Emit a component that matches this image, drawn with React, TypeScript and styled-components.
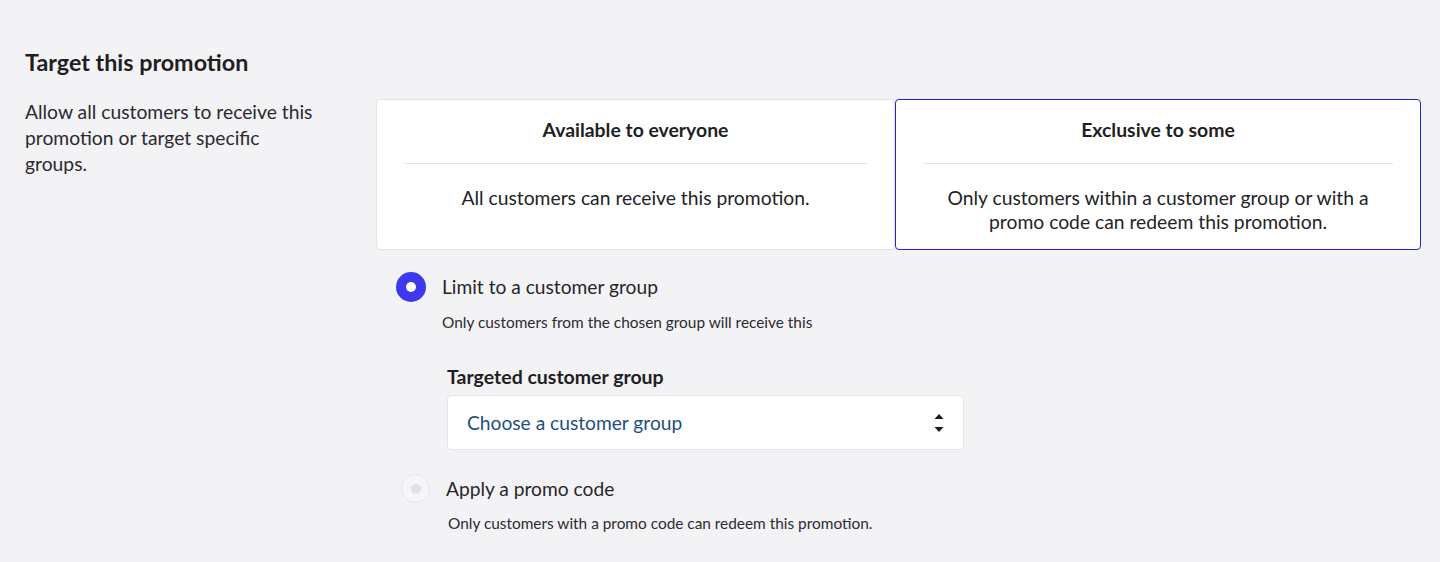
import React, { useState } from "react";
import styled, { createGlobalStyle } from "styled-components";

const GlobalStyle = createGlobalStyle`
  html, body {
    margin: 0;
    padding: 0;
    background: #f3f2f5;
    font-family: Lato, "Open Sans", "Liberation Sans", sans-serif;
    color: #222226;
  }
  * {
    box-sizing: border-box;
  }
`;

const Page = styled.div`
  padding: 49px 19px 20px 25px;
`;

const Heading = styled.h2`
  margin: 0 0 24px;
  font-size: 23.3px;
  line-height: 26px;
  font-weight: 700;
  color: #1f1f23;
`;

const Section = styled.div`
  display: grid;
  grid-template-columns: 351px 1fr;
`;

const Description = styled.p`
  margin: 0;
  max-width: 300px;
  font-size: 19.3px;
  line-height: 26px;
  color: #2a2a2e;
`;

const Options = styled.div`
  display: flex;
  flex-direction: column;
`;

const CardRow = styled.div`
  display: grid;
  grid-template-columns: 519px 1fr;
`;

const Card = styled.div<{ $active?: boolean }>`
  background: #ffffff;
  border: ${({ $active }) => ($active ? "1.5px solid #2222dd" : "1px solid #e3e2e6")};
  border-radius: 4px;
  padding: 17px 27px 15px;
  text-align: center;
  cursor: pointer;
`;

const CardTitle = styled.div`
  font-size: 19.4px;
  line-height: 26px;
  font-weight: 700;
  color: #1f1f23;
`;

const Divider = styled.hr`
  margin: 20px 0 22px;
  border: 0;
  border-top: 1px solid #e3e2e6;
`;

const CardText = styled.div`
  font-size: 19.3px;
  line-height: 24px;
  color: #232327;
`;

const Choice = styled.div<{ $indent: number; $gap: number }>`
  display: flex;
  flex-direction: column;
  padding-left: ${({ $indent }) => $indent}px;
  margin-top: ${({ $gap }) => $gap}px;
`;

const ChoiceRow = styled.label`
  display: flex;
  align-items: center;
  gap: 16px;
  cursor: pointer;
`;

const RadioDot = styled.span<{ $checked: boolean }>`
  flex: none;
  display: flex;
  align-items: center;
  justify-content: center;
  width: ${({ $checked }) => ($checked ? 30 : 29)}px;
  height: ${({ $checked }) => ($checked ? 30 : 29)}px;
  border-radius: 50%;
  background: ${({ $checked }) => ($checked ? "#3d39ef" : "#f6f5f8")};
  border: ${({ $checked }) => ($checked ? "none" : "1.5px solid #e6e5ea")};

  &::after {
    content: "";
    width: 10px;
    height: 10px;
    border-radius: 50%;
    background: ${({ $checked }) => ($checked ? "#ffffff" : "#e1e0e5")};
  }
`;

const ChoiceLabel = styled.span`
  font-size: 19.2px;
  line-height: 26px;
  color: #26262a;
`;

const ChoiceHint = styled.div<{ $offset: number }>`
  margin: 10px 0 0 ${({ $offset }) => $offset}px;
  font-size: 15.4px;
  line-height: 20px;
  color: #2c2c30;
`;

const Field = styled.div`
  display: flex;
  flex-direction: column;
  margin: 33px 0 0 71px;
  width: 517px;
`;

const FieldLabel = styled.div`
  font-size: 19.5px;
  line-height: 24px;
  font-weight: 700;
  color: #1f1f23;
  margin-bottom: 6px;
`;

const Select = styled.div`
  display: flex;
  align-items: center;
  justify-content: space-between;
  height: 55px;
  padding: 0 18px 0 19px;
  background: #ffffff;
  border: 1px solid #e6e5ea;
  border-radius: 4px;
  font-size: 19.2px;
  color: #1d4f7e;
  cursor: pointer;
`;

const Arrows = () => (
  <svg width="12" height="26" viewBox="0 0 12 26" aria-hidden="true">
    <path d="M6 4 L10.5 9 L1.5 9 Z" fill="#1b1b1f" />
    <path d="M1.5 17 L10.5 17 L6 22 Z" fill="#1b1b1f" />
  </svg>
);

export default function App() {
  const [exclusive, setExclusive] = useState(true);
  const [mode, setMode] = useState<"group" | "code">("group");

  return (
    <Page>
      <GlobalStyle />
      <Heading>Target this promotion</Heading>
      <Section>
        <Description>
          Allow all customers to receive this promotion or target specific groups.
        </Description>
        <Options>
          <CardRow>
            <Card $active={!exclusive} onClick={() => setExclusive(false)}>
              <CardTitle>Available to everyone</CardTitle>
              <Divider />
              <CardText>All customers can receive this promotion.</CardText>
            </Card>
            <Card $active={exclusive} onClick={() => setExclusive(true)}>
              <CardTitle>Exclusive to some</CardTitle>
              <Divider />
              <CardText>
                Only customers within a customer group or with a
                <br />
                promo code can redeem this promotion.
              </CardText>
            </Card>
          </CardRow>

          <Choice $indent={20} $gap={22}>
            <ChoiceRow onClick={() => setMode("group")}>
              <RadioDot $checked={mode === "group"} />
              <ChoiceLabel>Limit to a customer group</ChoiceLabel>
            </ChoiceRow>
            <ChoiceHint $offset={46}>
              Only customers from the chosen group will receive this
            </ChoiceHint>
          </Choice>

          <Field>
            <FieldLabel>Targeted customer group</FieldLabel>
            <Select>
              <span>Choose a customer group</span>
              <Arrows />
            </Select>
          </Field>

          <Choice $indent={25} $gap={24}>
            <ChoiceRow onClick={() => setMode("code")}>
              <RadioDot $checked={mode === "code"} />
              <ChoiceLabel>Apply a promo code</ChoiceLabel>
            </ChoiceRow>
            <ChoiceHint $offset={47}>
              Only customers with a promo code can redeem this promotion.
            </ChoiceHint>
          </Choice>
        </Options>
      </Section>
    </Page>
  );
}
